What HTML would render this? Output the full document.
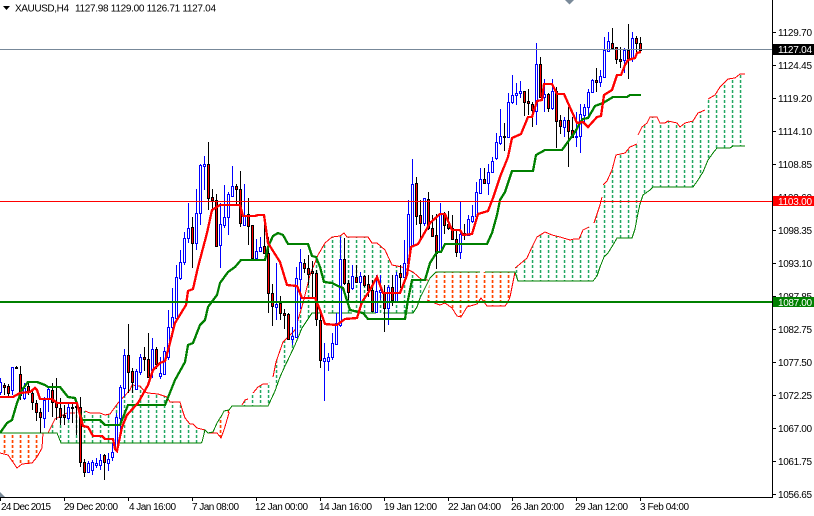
<!DOCTYPE html>
<html><head><meta charset="utf-8"><title>XAUUSD,H4</title>
<style>
html,body{margin:0;padding:0;background:#fff;width:814px;height:516px;overflow:hidden}
svg{display:block}
text{font-family:"Liberation Sans",sans-serif;font-size:10px;fill:#000}
.c path,.c polygon,.l{shape-rendering:crispEdges}
</style></head><body>
<svg width="814" height="516" viewBox="0 0 814 516" xmlns="http://www.w3.org/2000/svg">
<defs>
<pattern id="g" x="0" y="0" width="8" height="5" patternUnits="userSpaceOnUse"><rect x="3.8" width="1.5" height="3" fill="#22a862"/></pattern>
<pattern id="o" x="0" y="0" width="8" height="5" patternUnits="userSpaceOnUse"><rect x="3.7" width="1.7" height="3" fill="#ff4500"/></pattern>
</defs>
<rect width="814" height="516" fill="#fff"/>
<!-- clouds -->
<g>
<polygon fill="url(#o)" points="0,433 43,433 42,448 37,457 32,463 22,464 17,468 8,455 0,453"/>
<polygon fill="url(#g)" points="48,433 55,419 67,413 85,411 90,413 100,413 105,415 110,414 118,403 130,390 132,385 140,386 145,392 148,393 158,394 167,397 170,402 180,402 183,412 185,418 190,424 193,424 197,428 205,430 202,442 201,443 61,443 57,433"/>
<polygon fill="url(#o)" points="208,433 213,432 217,423 222,415 224,411 228,410 229,413 224,430 221,438 217,433"/>
<polygon fill="url(#g)" points="232,406 242,405 245,400 248,399 253,393 258,387 263,384 268,384 273,377 276,362 283,342 290,335 295,330 303,303 307,287 310,275 318,255 325,243 332,237 340,236 344,233 347,237 368,237 372,243 377,243 385,250 392,265 402,267 413,272 422,280 428,280 430,278 425,288 420,298 417,307 413,313 312,313 302,328 295,345 285,366 280,377 275,391 268,405"/>
<polygon fill="url(#o)" points="436,272 515,272 510,297 508,302 505,306 487,306 481,298 477,304 467,307 461,317 457,316 452,308 445,303 440,305 437,304 427,300 430,278"/>
<polygon fill="url(#g)" points="515,268 520,264 527,258 532,247 537,237 545,232 552,235 560,237 570,240 574,239 579,239 583,230 589,227 594,223 600,205 602,197 603,185 607,181 612,170 616,155 625,153 630,147 637,144 638,135 642,127 647,123 650,117 657,117 660,123 665,123 668,121 677,123 680,127 685,123 693,121 698,113 705,110 708,99 715,95 720,87 728,79 735,78 740,74 745,74 745,146 733,146 730,148 717,148 713,153 708,160 703,172 698,180 693,187 653,187 650,190 643,195 640,204 638,213 635,229 632,238 617,238 613,245 608,253 604,257 600,267 597,276 593,281 518,281"/>
</g>
<g fill="none" class="l" stroke-width="1">
<!-- senkou A -->
<path stroke="#f00" d="M0 453L8 455 17 468 22 464 32 463 37 457 42 448 43 433M48 433L55 419 67 413 75 413M85 411L90 413 100 413 105 415 110 414 118 403 130 390 132 385 140 386 145 392 148 393 158 394 167 397 170 402 180 402 183 412 185 418 190 424 193 424 197 428 205 430 208 433 217 433 221 438 224 430 229 413 228 410M242 405L245 400 248 399M253 393L258 387 263 384 268 384M273 377L276 362 283 342 290 335 295 330 303 303 307 287 310 275 318 255 325 243 332 237 340 236 344 233 347 237 368 237 372 243 377 243 385 250 392 265 402 267 413 272 422 280 428 280M427 300L437 304 440 305 445 303 452 308 457 316 461 317 467 307 477 304 481 298 487 306 505 306 508 302 510 297 515 272M515 268L520 264 527 258 532 247 537 237 545 232 552 235 560 237 570 240 574 239 579 239 583 230 589 227M594 223L600 205 602 197M603 185L607 181 612 170 616 155 625 153 630 147 637 144M638 135L642 127 647 123 650 117 657 117 660 123 665 123 668 121 677 123 680 127 685 123 693 121 698 113 705 110M708 99L715 95 720 87 728 79 735 78 740 74 745 74"/>
<!-- senkou B -->
<path stroke="#008000" d="M0 433H48M48 433H57L61 443H201L202 442 205 430 208 433 213 432 217 423 222 415 224 411 229 410 232 406H268L275 391 280 377 285 366 295 345 302 328 312 313H322M328 313H352M358 313H376M383 313H405L413 313 417 307 420 298 425 288 430 278 436 272H480M485 272H515L518 281H593L597 276 600 267 604 257 608 253 613 245 617 238H632L635 229 638 213 640 204 643 195 650 190 653 187H693L698 180 703 172 708 160 713 153 717 148H730L733 146H745"/>
</g>
<!-- candles -->
<g fill="none" class="c" stroke-width="1">
<path stroke="#00f" d="M0.5 378V395M12.5 367V395M24.5 383V400M44.5 397V428M48.5 388V412M68.5 403V420M88.5 461V473M92.5 460V475M96.5 458V468M100.5 454V470M108.5 453V471M112.5 443V461M116.5 413V452M120.5 385V432M124.5 349V397M136.5 369V390M140.5 354V375M152.5 338V378M160.5 357V379M164.5 347V375M168.5 310V360M172.5 288V337M176.5 265V320M180.5 250V280M184.5 232V265M188.5 203V243M196.5 189V250M200.5 164V225M204.5 156V190M220.5 203V268M224.5 185V228M228.5 192V235M232.5 166V197M244.5 184V226M256.5 239V259M260.5 237V252M276.5 263V320M292.5 327V345M296.5 267V337M300.5 249V309M324.5 343V401M328.5 353V371M332.5 333V360M336.5 313V345M340.5 237V327M352.5 265V290M360.5 272V307M376.5 275V313M380.5 275V300M388.5 285V325M396.5 272V303M404.5 240V277M408.5 200V265M412.5 159V246M424.5 198V226M440.5 203V253M460.5 202V259M468.5 215V236M472.5 205V223M476.5 182V217M480.5 168V193M488.5 164V195M492.5 157V173M496.5 133V160M500.5 109V145M508.5 93V138M512.5 75V104M516.5 83V105M520.5 81V98M536.5 43V125M544.5 79V112M552.5 79V110M564.5 117V137M576.5 112V147M580.5 104V153M584.5 104V125M588.5 89V118M592.5 79V93M600.5 70V87M604.5 37V78M608.5 32V52M624.5 48V73M632.5 32V62"/>
<path stroke="#00f" fill="#fff" d="M-.5 382.5h2V392.5h-2zM11.5 367.5h2V390.5h-2zM23.5 388.5h2V398.5h-2zM43.5 400.5h2V418.5h-2zM47.5 389.5h2V398.5h-2zM67.5 407.5h2V418.5h-2zM87.5 463.5h2V472.5h-2zM91.5 462.5h2V470.5h-2zM95.5 463.5h2V465.5h-2zM99.5 460.5h2V465.5h-2zM107.5 459.5h2V463.5h-2zM111.5 452.5h2V457.5h-2zM115.5 417.5h2V450.5h-2zM119.5 387.5h2V418.5h-2zM123.5 355.5h2V388.5h-2zM135.5 371.5h2V389.5h-2zM139.5 357.5h2V372.5h-2zM151.5 349.5h2V370.5h-2zM159.5 373.5h2V376.5h-2zM163.5 351.5h2V374.5h-2zM167.5 327.5h2V357.5h-2zM171.5 317.5h2V327.5h-2zM175.5 277.5h2V318.5h-2zM179.5 262.5h2V278.5h-2zM183.5 238.5h2V262.5h-2zM187.5 228.5h2V238.5h-2zM195.5 213.5h2V243.5h-2zM199.5 165.5h2V213.5h-2zM203.5 164.5h2V166.5h-2zM219.5 224.5h2V245.5h-2zM223.5 217.5h2V225.5h-2zM227.5 194.5h2V217.5h-2zM231.5 186.5h2V196.5h-2zM243.5 215.5h2V225.5h-2zM255.5 251.5h2V258.5h-2zM259.5 247.5h2V251.5h-2zM275.5 304.5h2V307.5h-2zM291.5 336.5h2V339.5h-2zM295.5 278.5h2V337.5h-2zM299.5 262.5h2V279.5h-2zM323.5 358.5h2V361.5h-2zM327.5 357.5h2V361.5h-2zM331.5 343.5h2V357.5h-2zM335.5 323.5h2V344.5h-2zM339.5 259.5h2V325.5h-2zM351.5 276.5h2V288.5h-2zM359.5 276.5h2V282.5h-2zM375.5 291.5h2V312.5h-2zM379.5 290.5h2V292.5h-2zM387.5 287.5h2V308.5h-2zM395.5 275.5h2V301.5h-2zM403.5 263.5h2V277.5h-2zM407.5 214.5h2V263.5h-2zM411.5 184.5h2V245.5h-2zM423.5 198.5h2V223.5h-2zM439.5 213.5h2V252.5h-2zM459.5 234.5h2V252.5h-2zM467.5 219.5h2V235.5h-2zM471.5 216.5h2V221.5h-2zM475.5 192.5h2V216.5h-2zM479.5 179.5h2V193.5h-2zM487.5 172.5h2V183.5h-2zM491.5 161.5h2V172.5h-2zM495.5 142.5h2V158.5h-2zM499.5 136.5h2V143.5h-2zM507.5 102.5h2V137.5h-2zM511.5 95.5h2V102.5h-2zM515.5 93.5h2V95.5h-2zM519.5 91.5h2V93.5h-2zM535.5 64.5h2V111.5h-2zM543.5 94.5h2V97.5h-2zM551.5 91.5h2V108.5h-2zM563.5 120.5h2V127.5h-2zM575.5 136.5h2V137.5h-2zM579.5 114.5h2V136.5h-2zM583.5 107.5h2V115.5h-2zM587.5 92.5h2V107.5h-2zM591.5 80.5h2V92.5h-2zM599.5 76.5h2V82.5h-2zM603.5 50.5h2V77.5h-2zM607.5 41.5h2V51.5h-2zM623.5 50.5h2V60.5h-2zM631.5 38.5h2V58.5h-2z"/>
<path stroke="#000" d="M4.5 383V395M8.5 384V396M16.5 366V368M20.5 366V400M28.5 383V395M32.5 390V410M36.5 400V421M40.5 408V433M52.5 383V417M56.5 378V420M60.5 398V425M64.5 405V425M72.5 402V423M76.5 400V435M80.5 397V467M84.5 459V477M104.5 454V480M128.5 324V393M132.5 368V393M144.5 347V371M148.5 333V377M156.5 347V369M192.5 217V268M208.5 142V210M212.5 189V210M216.5 194V247M236.5 184V205M240.5 171V227M248.5 198V245M252.5 225V258M264.5 225V254M268.5 237V313M272.5 284V326M280.5 296V320M284.5 309V329M288.5 313V340M304.5 259V273M308.5 255V285M312.5 261V297M316.5 270V326M320.5 313V368M344.5 238V285M348.5 280V300M356.5 265V283M364.5 275V287M368.5 275V297M372.5 280V312M384.5 285V332M392.5 275V306M400.5 265V288M416.5 177V225M420.5 200V238M428.5 192V230M432.5 215V237M436.5 214V269M444.5 212V234M448.5 211V230M452.5 215V240M456.5 230V257M464.5 224V240M484.5 168V184M504.5 123V151M524.5 91V116M528.5 89V115M532.5 102V127M540.5 57V97M548.5 93V112M556.5 87V148M560.5 115V134M568.5 107V167M572.5 117V138M596.5 68V92M612.5 28V50M616.5 47V64M620.5 47V68M628.5 24V79M636.5 36V53M640.5 37V53"/>
<path stroke="#000" fill="#f00" d="M3.5 385.5h2V387.5h-2zM7.5 386.5h2V393.5h-2zM15.5 367.5h2V368.5h-2zM19.5 374.5h2V395.5h-2zM27.5 386.5h2V392.5h-2zM31.5 393.5h2V402.5h-2zM35.5 403.5h2V412.5h-2zM39.5 412.5h2V417.5h-2zM51.5 390.5h2V402.5h-2zM55.5 403.5h2V407.5h-2zM59.5 408.5h2V417.5h-2zM63.5 415.5h2V417.5h-2zM71.5 407.5h2V408.5h-2zM75.5 406.5h2V407.5h-2zM79.5 407.5h2V462.5h-2zM83.5 462.5h2V472.5h-2zM103.5 455.5h2V462.5h-2zM127.5 355.5h2V372.5h-2zM131.5 371.5h2V382.5h-2zM143.5 357.5h2V359.5h-2zM147.5 359.5h2V377.5h-2zM155.5 349.5h2V364.5h-2zM191.5 227.5h2V243.5h-2zM207.5 164.5h2V198.5h-2zM211.5 197.5h2V200.5h-2zM215.5 200.5h2V246.5h-2zM235.5 186.5h2V189.5h-2zM239.5 189.5h2V223.5h-2zM247.5 214.5h2V226.5h-2zM251.5 225.5h2V258.5h-2zM263.5 246.5h2V253.5h-2zM267.5 253.5h2V293.5h-2zM271.5 293.5h2V306.5h-2zM279.5 303.5h2V313.5h-2zM283.5 313.5h2V315.5h-2zM287.5 314.5h2V339.5h-2zM303.5 263.5h2V268.5h-2zM307.5 268.5h2V274.5h-2zM311.5 271.5h2V273.5h-2zM315.5 273.5h2V319.5h-2zM319.5 320.5h2V360.5h-2zM343.5 259.5h2V283.5h-2zM347.5 283.5h2V292.5h-2zM355.5 277.5h2V282.5h-2zM363.5 276.5h2V285.5h-2zM367.5 284.5h2V290.5h-2zM371.5 290.5h2V311.5h-2zM383.5 292.5h2V308.5h-2zM391.5 287.5h2V300.5h-2zM399.5 273.5h2V277.5h-2zM415.5 183.5h2V216.5h-2zM419.5 215.5h2V223.5h-2zM427.5 199.5h2V228.5h-2zM431.5 228.5h2V236.5h-2zM435.5 235.5h2V253.5h-2zM443.5 213.5h2V225.5h-2zM447.5 224.5h2V228.5h-2zM451.5 228.5h2V239.5h-2zM455.5 239.5h2V252.5h-2zM463.5 233.5h2V235.5h-2zM483.5 179.5h2V183.5h-2zM503.5 136.5h2V137.5h-2zM523.5 91.5h2V102.5h-2zM527.5 101.5h2V103.5h-2zM531.5 104.5h2V110.5h-2zM539.5 64.5h2V97.5h-2zM547.5 94.5h2V108.5h-2zM555.5 91.5h2V121.5h-2zM559.5 120.5h2V126.5h-2zM567.5 120.5h2V131.5h-2zM571.5 130.5h2V137.5h-2zM595.5 80.5h2V82.5h-2zM611.5 43.5h2V48.5h-2zM615.5 47.5h2V59.5h-2zM619.5 59.5h2V61.5h-2zM627.5 50.5h2V58.5h-2zM635.5 38.5h2V43.5h-2zM639.5 43.5h2V50.5h-2z"/>
</g>
<!-- kijun & tenkan -->
<g fill="none" stroke-width="2.3" stroke-linejoin="miter" class="l">
<path stroke="#008000" d="M0 433L7 423 12 420 17 403 22 390 28 382 37 382 45 385 48 387 60 387 68 397 75 398 78 407 82 420 100 420 105 425 120 425 128 405 165 405 175 380 185 362 188 345 193 343 200 325 205 320 208 307 217 295 220 283 228 272 235 267 241 260 265 260 268 247 273 236 278 233 283 235 288 244 308 244 312 256 316 257 320 267 324 282 332 283 338 286 343 288 350 310 363 313 368 319 405 319 408 300 412 280 425 280 430 263 437 252 441 252 445 244 487 244 492 233 497 215 500 200 505 192 512 171 533 171 536 155 545 150 562 150 575 132 580 123 583 119 588 118 595 106 603 103 613 97 627 97 630 95 641 95"/>
<path stroke="#f00" d="M0 397L13 397 20 393 30 392 35 388 37 390 40 399 52 399 57 403 77 403 80 415 83 426 88 427 93 436 102 436 105 439 113 439 115 449 117 451 122 427 127 415 138 403 148 385 153 370 160 363 165 361 170 343 175 323 186 305 188 291 193 289 198 267 207 233 212 210 220 205 240 205 243 216 255 216 258 215 264 215 268 243 280 262 287 285 297 286 302 298 315 298 320 310 325 324 337 325 345 319 357 318 362 302 370 290 377 277 383 293 400 293 407 275 411 247 418 244 425 232 430 223 440 214 445 214 452 230 460 230 463 235 472 234 478 214 488 211 493 198 500 177 508 157 512 138 521 134 528 117 532 117 537 101 542 100 544 84 552 84 557 94 564 94 577 123 583 122 588 127 597 117 601 116 604 95 612 90 617 75 621 75 625 65 628 60 635 58 637 53 641 52"/>
</g>
<!-- horizontal levels -->
<rect x="0" y="49" width="773" height="1" fill="#778899"/>
<rect x="0" y="201" width="773" height="1" fill="#f00"/>
<rect x="0" y="301" width="773" height="2" fill="#008000"/>
<!-- axes -->
<rect x="772" y="0" width="1" height="497" fill="#000"/>
<rect x="0" y="497" width="773" height="1" fill="#000"/>
<path class="l" stroke="#000" fill="none" d="M773 32.5h3M773 65.5h3M773 98.5h3M773 131.5h3M773 164.5h3M773 197.5h3M773 230.5h3M773 263.5h3M773 296.5h3M773 329.5h3M773 362.5h3M773 395.5h3M773 428.5h3M773 461.5h3M773 494.5h3M0.5 498v3M64.5 498v3M128.5 498v3M192.5 498v3M256.5 498v3M320.5 498v3M384.5 498v3M448.5 498v3M512.5 498v3M576.5 498v3M640.5 498v3"/>
<!-- price labels -->
<g>
<text x="778" y="36" textLength="34">1129.70</text>
<text x="778" y="69" textLength="34">1124.45</text>
<text x="778" y="102" textLength="34">1119.20</text>
<text x="778" y="135" textLength="34">1114.10</text>
<text x="778" y="168" textLength="34">1108.85</text>
<text x="778" y="201" textLength="34">1103.60</text>
<text x="778" y="234" textLength="34">1098.35</text>
<text x="778" y="267" textLength="34">1093.10</text>
<text x="778" y="300" textLength="34">1087.85</text>
<text x="778" y="333" textLength="34">1082.75</text>
<text x="778" y="366" textLength="34">1077.50</text>
<text x="778" y="399" textLength="34">1072.25</text>
<text x="778" y="432" textLength="34">1067.00</text>
<text x="778" y="465" textLength="34">1061.75</text>
<text x="778" y="498" textLength="34">1056.65</text>
</g>
<rect x="773" y="44" width="41" height="11" fill="#000"/>
<text x="778" y="53" textLength="34" style="fill:#fff">1127.04</text>
<rect x="773" y="196" width="41" height="10" fill="#f00"/>
<text x="778" y="205" textLength="34" style="fill:#fff">1103.00</text>
<rect x="773" y="297" width="41" height="10" fill="#008000"/>
<text x="778" y="306" textLength="34" style="fill:#fff">1087.00</text>
<!-- time labels -->
<text x="1" y="510" textLength="50">24 Dec 2015</text>
<text x="64" y="510" textLength="54">29 Dec 20:00</text>
<text x="129" y="510" textLength="47">4 Jan 16:00</text>
<text x="192" y="510" textLength="47">7 Jan 08:00</text>
<text x="255" y="510" textLength="53">12 Jan 00:00</text>
<text x="319" y="510" textLength="53">14 Jan 16:00</text>
<text x="384" y="510" textLength="53">19 Jan 12:00</text>
<text x="448" y="510" textLength="53">22 Jan 04:00</text>
<text x="511" y="510" textLength="53">26 Jan 20:00</text>
<text x="575" y="510" textLength="53">29 Jan 12:00</text>
<text x="640" y="510" textLength="49">3 Feb 04:00</text>
<!-- header -->
<path d="M3 6h7l-3.500 4z" fill="#000"/>
<text x="15" y="11.500" textLength="54">XAUUSD,H4</text>
<text x="75" y="11.500" textLength="141">1127.98 1129.00 1126.71 1127.04</text>
<!-- markers -->
<path d="M565 0h9l-4.500 4.500z" fill="#7a8a99"/>
<path d="M0 492l5 5H0z" fill="#7a8a99"/>
</svg>
</body></html>
